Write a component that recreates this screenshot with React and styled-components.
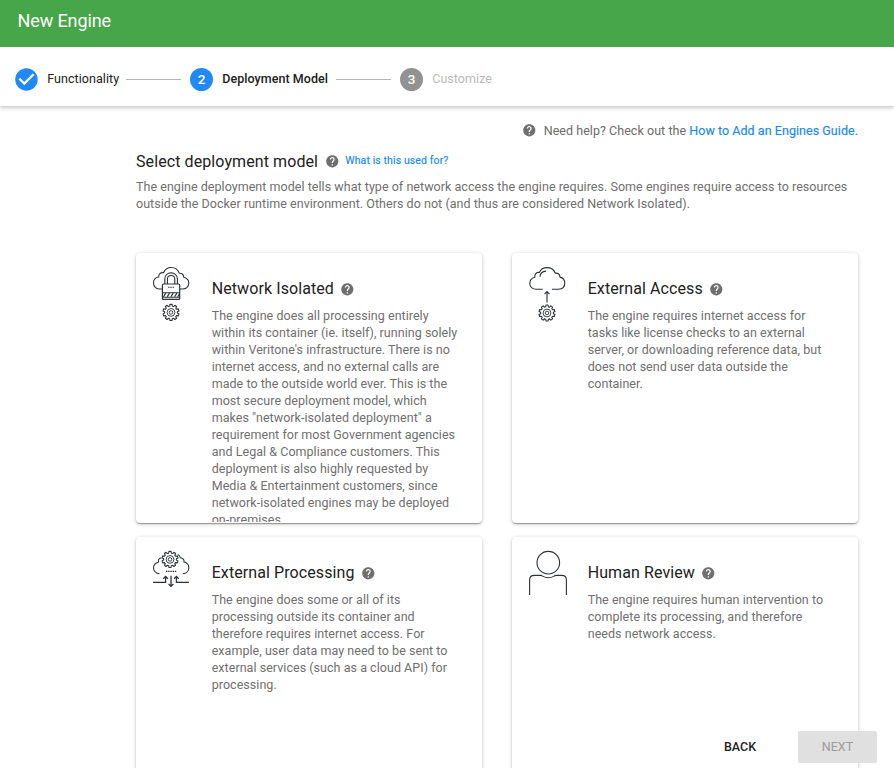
import React from 'react';
import styled, { createGlobalStyle } from 'styled-components';
import { MdHelp, MdCheckCircle } from 'react-icons/md';

const GlobalStyle = createGlobalStyle`
  * { box-sizing: border-box; }
  body { margin: 0; background: #fff; font-family: Roboto, sans-serif; color: #212121; overflow: hidden; }
`;

const Page = styled.div`
  position: relative;
  height: 768px;
  overflow: hidden;
  display: flex;
  flex-direction: column;
`;
const Header = styled.header`
  flex: none;
  height: 47px;
  padding: 10px 17.5px 0;
  background: #46a649;
  color: #fff;
  font-size: 18px;
  line-height: 22px;
  letter-spacing: -0.1px;
`;
const Stepper = styled.nav`
  flex: none;
  display: flex;
  align-items: center;
  height: 59px;
  padding: 5px 15px 0;
  box-shadow: 0 2px 4px rgba(0, 0, 0, 0.22);
  clip-path: inset(0 0 -8px 0);
`;
const StepBadge = styled.span`
  display: flex;
  align-items: center;
  justify-content: center;
  width: 23px;
  height: 23px;
  border-radius: 50%;
  background: ${(p) => (p.$active ? '#2089f3' : '#929292')};
  color: #fff;
  font-size: 13.5px;
  font-weight: 500;
`;
const StepCheck = styled(MdCheckCircle)`
  width: 27px;
  height: 27px;
  margin: -2px;
  color: #2089f3;
`;
const StepLabel = styled.span`
  width: ${(p) => p.$width}px;
  margin: -1px 0 0 9px;
  white-space: nowrap;
  font-size: 12.5px;
  line-height: 16px;
  letter-spacing: 0.06px;
  text-indent: 0.2px;
  font-weight: ${(p) => (p.$bold ? 500 : 400)};
  color: ${(p) => (p.$muted ? '#b9b9b9' : '#212121')};
`;
const Connector = styled.span`
  width: 55px;
  height: 1px;
  margin: 0 9px 0 7px;
  background: #b5b5b5;
`;
const Main = styled.main`
  width: 722px;
  margin-left: 136px;
`;
const HelpLine = styled.div`
  display: flex;
  justify-content: flex-end;
  align-items: center;
  height: 16px;
  margin-top: 16px;
  font-size: 12.5px;
  letter-spacing: 0.045px;
  white-space: nowrap;
  color: #6b6b6b;
`;
const HelpIcon = styled(MdHelp)`
  flex: none;
  width: 14.6px;
  height: 14.6px;
  color: #6f6f6f;
  margin: ${(p) => p.$m || '0'};
`;
const Link = styled.a`
  color: #168af3;
  font-size: ${(p) => (p.$small ? '10.5px' : 'inherit')};
  letter-spacing: ${(p) => (p.$small ? '0.11px' : 'inherit')};
  margin-top: ${(p) => (p.$small ? '-1px' : '0')};
  white-space: pre;
  -webkit-text-stroke: 0.15px currentColor;
`;
const TitleRow = styled.div`
  display: flex;
  align-items: center;
  height: 20px;
  margin-top: 13px;
`;
const Title = styled.h1`
  margin: 0;
  font-size: 16px;
  font-weight: 400;
  letter-spacing: 0.09px;
  white-space: nowrap;
`;
const Text = styled.p`
  margin: 0;
  font-size: 12.5px;
  line-height: 17px;
  letter-spacing: 0.04px;
  color: #6f6f6f;
  white-space: pre;
`;
const Intro = styled.section`
  margin-top: 7px;
`;
const Grid = styled.section`
  display: grid;
  grid-template-columns: 346px 346px;
  grid-auto-rows: 270px;
  gap: 14px 30px;
  margin-top: 41px;
`;
const Card = styled.article`
  display: flex;
  gap: 19.7px;
  padding: 13px 16px 0;
  border-radius: 4px;
  background: #fff;
  box-shadow: 0 1px 4px rgba(0, 0, 0, 0.22), 0 1px 1px rgba(0, 0, 0, 0.2), 0 2px 1px -1px rgba(0, 0, 0, 0.16);
`;
const CardBody = styled.div`
  flex: 1;
  height: 256px;
  padding-top: 12px;
  overflow: hidden;
`;
const CardTitle = styled.h2`
  display: flex;
  align-items: center;
  height: 20px;
  margin: 0 0 9px;
  font-size: 16px;
  font-weight: 400;
  letter-spacing: 0.09px;
  white-space: nowrap;
`;
const LineArt = styled.svg`
  flex: none;
  width: 40px;
  height: 60px;
  fill: none;
  stroke: #2d3236;
  stroke-width: 1.1;
`;
const Actions = styled.div`
  position: absolute;
  right: 17px;
  bottom: 5px;
  display: flex;
  gap: 18px;
`;
const Button = styled.button`
  width: ${(p) => (p.disabled ? 79 : 80)}px;
  height: 32px;
  padding: 0 0 2px;
  border: 0;
  border-radius: 2px;
  font: ${(p) => (p.disabled ? 400 : 500)} 12.5px Roboto, sans-serif;
  background: ${(p) => (p.disabled ? '#e0e0e0' : 'transparent')};
  color: ${(p) => (p.disabled ? '#9c9c9c' : '#212121')};
`;

const gearOutline = (cx, cy) => {
  const teeth = 10;
  const points = [];
  for (let i = 0; i < teeth; i += 1) {
    [[-0.34, 6.4], [-0.21, 8.1], [0.21, 8.1], [0.34, 6.4]].forEach(([offset, r]) => {
      const a = ((i + offset) / teeth) * Math.PI * 2 - Math.PI / 2;
      points.push(`${(cx + r * Math.cos(a)).toFixed(2)} ${(cy + r * Math.sin(a)).toFixed(2)}`);
    });
  }
  return `M${points.join('L')}Z`;
};

const Gear = ({ cx, cy }) => (
  <g strokeLinejoin="round">
    <path d={gearOutline(cx, cy)} />
    <circle cx={cx} cy={cy} r="3.9" strokeWidth="0.9" />
    <circle cx={cx} cy={cy} r="1.8" strokeWidth="0.9" />
  </g>
);

const IsolatedIcon = () => (
  <LineArt viewBox="0 0 40 60">
    <path d="M10 23H8C4 23 1.5 20.5 1.5 17C1.5 13.6 3.7 11.4 6.7 11C6.5 8.2 8.5 6.2 11.5 6.7C13 3.3 15.7 1.5 19 1.5C23 1.5 26 3.6 27.2 7.2C30 7 31.8 8.8 31.8 11.3C34.8 12.1 36.8 14.2 36.8 17C36.8 20.5 34.2 23 30.6 23H28" />
    <path d="M12.8 18V13C12.8 4.8 25.4 4.8 25.4 13V18M15.4 18V13.3C15.4 8.2 22.8 8.2 22.8 13.3V18" />
    <rect x="10.4" y="18" width="17.3" height="15.4" rx="1" strokeWidth="1.2" />
    <path d="M16 21.2h6" strokeDasharray="1.5 0.8" />
    <path d="M10.4 26.8H27.7M10.4 31.2H27.7" />
    <path d="M11.5 30.8l2.3-3.7M15.2 30.8l2.3-3.7M18.9 30.8l2.3-3.7M22.6 30.8l2.3-3.7M25.7 30.8l1.8-3" strokeWidth="1.2" />
    <Gear cx={19} cy={46.4} />
  </LineArt>
);

const AccessIcon = () => (
  <LineArt viewBox="0 0 40 60">
    <path d="M14.7 23.3H8.3C4.5 23.3 1.8 20.8 1.8 17.4C1.8 14.3 3.8 11.9 6.8 11.2C6.4 8.2 8.4 6.1 11.3 6.4C12.7 3.3 15.5 1.6 18.9 1.6C22.7 1.6 26 3.8 27.3 7.2C29.8 7 31.7 8.7 32 11.1C35.1 11.8 36.8 14 36.8 17.1C36.8 20.8 34.6 23.3 30.5 23.3H24M12 10.7C12.2 7.5 14.4 5.3 18 5.1" />
    <path d="M19 36.5V26M16.5 28.1L19 25.6L21.5 28.1" />
    <Gear cx={19} cy={47} />
  </LineArt>
);

const ProcessingIcon = () => (
  <LineArt viewBox="0 0 40 60">
    <path d="M6.6 12.2C6.1 10 7.2 8.3 9.3 7.8M6.6 12.2C3.4 12.8 1.5 15.1 1.5 18C1.5 21 4 23.5 7.5 23.7M25.7 4.5C27.2 5.1 28 6.2 28.3 7.7C31 8 32.3 9.7 32 12C35 12.7 36.8 14.9 36.8 17.8C36.8 21.1 34.4 23.6 30.8 23.7" />
    <Gear cx={18} cy={9.4} />
    <path d="M14 21.3h10.5" strokeDasharray="1.4 0.8" strokeWidth="1.3" />
    <path d="M1 32.4H13.6V26.5M11.3 28.7L13.6 26.4L15.9 28.7M37 32.4H24.4V26.5M22.1 28.7L24.4 26.4L26.7 28.7M19 25.7V36.3M16.6 34L19 36.4L21.4 34" strokeWidth="1.25" />
  </LineArt>
);

const ReviewIcon = () => (
  <LineArt viewBox="0 0 40 60">
    <circle cx="20.3" cy="12.7" r="11.3" />
    <path d="M1.6 45V30C1.6 27.2 3.5 25.4 6.4 25.4H12.8C14.5 25.4 15.4 27.8 20.3 27.8C25.2 27.8 26.1 25.4 27.8 25.4H33.6C36.5 25.4 38.4 27.2 38.4 30V45" />
  </LineArt>
);

const models = [
  {
    title: 'Network Isolated',
    Icon: IsolatedIcon,
    lines: [
      'The engine does all processing entirely',
      'within its container (ie. itself), running solely',
      "within Veritone's infrastructure. There is no",
      'internet access, and no external calls are',
      'made to the outside world ever. This is the',
      'most secure deployment model, which',
      'makes "network-isolated deployment" a',
      'requirement for most Government agencies',
      'and Legal & Compliance customers. This',
      'deployment is also highly requested by',
      'Media & Entertainment customers, since',
      'network-isolated engines may be deployed',
      'on-premises.',
    ],
  },
  {
    title: 'External Access',
    Icon: AccessIcon,
    lines: [
      'The engine requires internet access for',
      'tasks like license checks to an external',
      'server, or downloading reference data, but',
      'does not send user data outside the',
      'container.',
    ],
  },
  {
    title: 'External Processing',
    Icon: ProcessingIcon,
    lines: [
      'The engine does some or all of its',
      'processing outside its container and',
      'therefore requires internet access. For',
      'example, user data may need to be sent to',
      'external services (such as a cloud API) for',
      'processing.',
    ],
  },
  {
    title: 'Human Review',
    Icon: ReviewIcon,
    lines: [
      'The engine requires human intervention to',
      'complete its processing, and therefore',
      'needs network access.',
    ],
  },
];

export default function App() {
  return (
    <Page>
      <GlobalStyle />
      <Header>New Engine</Header>
      <Stepper>
        <StepCheck />
        <StepLabel $width={72}>Functionality</StepLabel>
        <Connector />
        <StepBadge $active>2</StepBadge>
        <StepLabel $width={107} $bold>Deployment Model</StepLabel>
        <Connector />
        <StepBadge>3</StepBadge>
        <StepLabel $width={62} $muted>Customize</StepLabel>
      </Stepper>
      <Main>
        <HelpLine>
          <HelpIcon $m="0 7px 0 0" />
          <span>Need help? Check out the <Link>How to Add an Engines Guide.</Link></span>
        </HelpLine>
        <TitleRow>
          <Title>Select deployment model</Title>
          <HelpIcon $m="1px 5.6px 0 7px" />
          <Link $small>What is this used for?</Link>
        </TitleRow>
        <Intro>
          <Text>
            {'The engine deployment model tells what type of network access the engine requires. Some engines require access to resources\noutside the Docker runtime environment. Others do not (and thus are considered Network Isolated).'}
          </Text>
        </Intro>
        <Grid>
          {models.map(({ title, Icon, lines }) => (
            <Card key={title}>
              <Icon />
              <CardBody>
                <CardTitle>
                  {title}
                  <HelpIcon $m="2px 0 0 6.5px" />
                </CardTitle>
                <Text>{lines.join('\n')}</Text>
              </CardBody>
            </Card>
          ))}
        </Grid>
      </Main>
      <Actions>
        <Button>BACK</Button>
        <Button disabled>NEXT</Button>
      </Actions>
    </Page>
  );
}
